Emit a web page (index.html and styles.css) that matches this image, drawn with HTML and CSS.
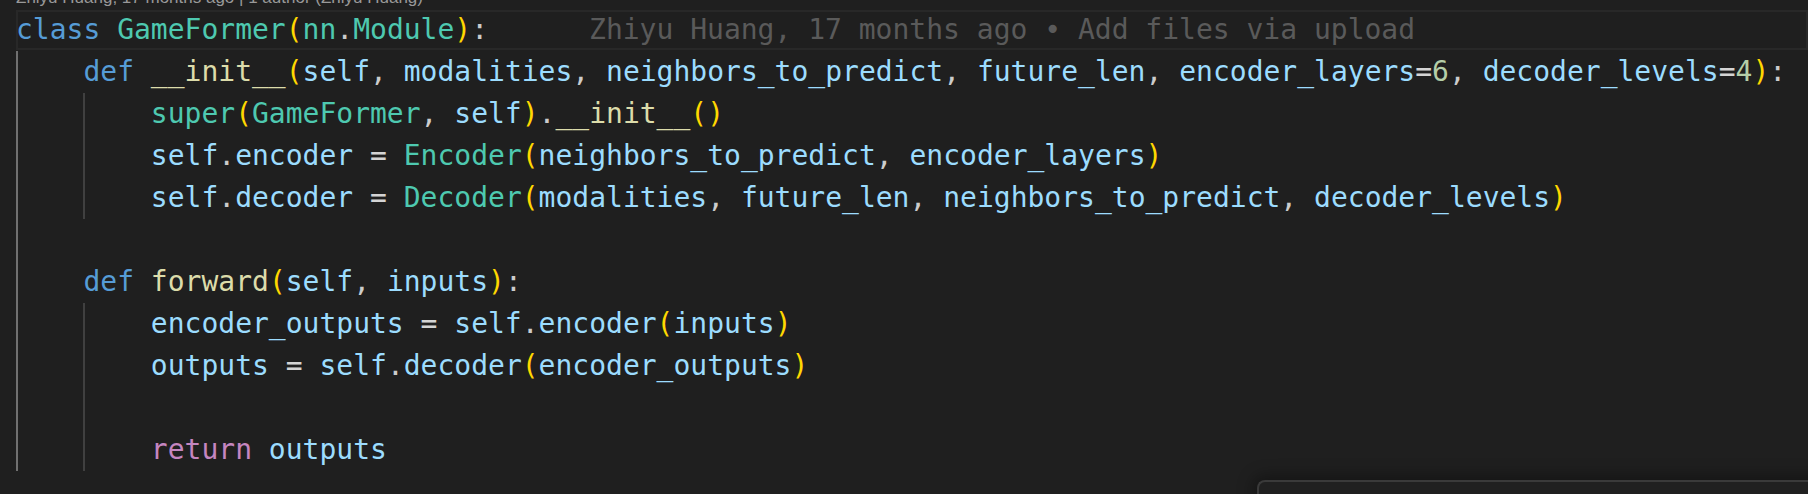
FILE: index.html
```html
<!DOCTYPE html>
<html lang="en">
<head>
<meta charset="utf-8">
<title>GameFormer</title>
<link rel="stylesheet" href="styles.css">
</head>
<body>
<div class="editor">
  <div class="codelens"><span class="lens-text">Zhiyu Huang, 17 months ago | 1 author (Zhiyu Huang)</span></div>
  <div class="line current"><span class="kw">class</span> <span class="ty">GameFormer</span><span class="br">(</span><span class="ty">nn</span><span class="p">.</span><span class="ty">Module</span><span class="br">)</span><span class="p">:</span><span class="blame">Zhiyu Huang, 17 months ago • Add files via upload</span></div>
  <div class="line"><span class="ig ig-a"></span><span class="kw">def</span> <span class="fn">__init__</span><span class="br">(</span><span class="v">self</span><span class="p">,</span> <span class="v">modalities</span><span class="p">,</span> <span class="v">neighbors_to_predict</span><span class="p">,</span> <span class="v">future_len</span><span class="p">,</span> <span class="v">encoder_layers</span><span class="op">=</span><span class="num">6</span><span class="p">,</span> <span class="v">decoder_levels</span><span class="op">=</span><span class="num">4</span><span class="br">)</span><span class="p">:</span></div>
  <div class="line"><span class="ig ig-a"></span><span class="ig"></span><span class="ty">super</span><span class="br">(</span><span class="ty">GameFormer</span><span class="p">,</span> <span class="v">self</span><span class="br">)</span><span class="p">.</span><span class="fn">__init__</span><span class="br">()</span></div>
  <div class="line"><span class="ig ig-a"></span><span class="ig"></span><span class="v">self</span><span class="p">.</span><span class="v">encoder</span> <span class="op">=</span> <span class="ty">Encoder</span><span class="br">(</span><span class="v">neighbors_to_predict</span><span class="p">,</span> <span class="v">encoder_layers</span><span class="br">)</span></div>
  <div class="line"><span class="ig ig-a"></span><span class="ig"></span><span class="v">self</span><span class="p">.</span><span class="v">decoder</span> <span class="op">=</span> <span class="ty">Decoder</span><span class="br">(</span><span class="v">modalities</span><span class="p">,</span> <span class="v">future_len</span><span class="p">,</span> <span class="v">neighbors_to_predict</span><span class="p">,</span> <span class="v">decoder_levels</span><span class="br">)</span></div>
  <div class="line"><span class="ig ig-a"></span></div>
  <div class="line"><span class="ig ig-a"></span><span class="kw">def</span> <span class="fn">forward</span><span class="br">(</span><span class="v">self</span><span class="p">,</span> <span class="v">inputs</span><span class="br">)</span><span class="p">:</span></div>
  <div class="line"><span class="ig ig-a"></span><span class="ig"></span><span class="v">encoder_outputs</span> <span class="op">=</span> <span class="v">self</span><span class="p">.</span><span class="v">encoder</span><span class="br">(</span><span class="v">inputs</span><span class="br">)</span></div>
  <div class="line"><span class="ig ig-a"></span><span class="ig"></span><span class="v">outputs</span> <span class="op">=</span> <span class="v">self</span><span class="p">.</span><span class="v">decoder</span><span class="br">(</span><span class="v">encoder_outputs</span><span class="br">)</span></div>
  <div class="line"><span class="ig ig-a"></span><span class="ig"></span></div>
  <div class="line"><span class="ig ig-a"></span><span class="ig"></span><span class="rk">return</span> <span class="v">outputs</span></div>
</div>
<div class="widget"></div>
</body>
</html>
```
FILE: styles.css
```css
html, body {
  margin: 0;
  padding: 0;
  background: #1f1f1f;
  width: 1808px;
  height: 494px;
  overflow: hidden;
}

.editor {
  padding-left: 16px;
  font-family: "DejaVu Sans Mono", monospace;
  font-size: 28px;
  color: #cccccc;
}

.codelens {
  height: 9px;
  overflow: hidden;
  display: flex;
  align-items: flex-end;
}

.lens-text {
  font-family: "Liberation Sans", Arial, sans-serif;
  font-size: 17px;
  line-height: 20px;
  margin-bottom: 1px;
  color: #999999;
  white-space: pre;
  flex: none;
}

.line {
  height: 42px;
  line-height: 42px;
  white-space: pre;
}

.current {
  position: relative;
}

.current::before {
  content: "";
  position: absolute;
  left: 0;
  right: 0;
  top: 1px;
  bottom: 1px;
  border: 2px solid #282828;
  pointer-events: none;
}

.ig {
  display: inline-block;
  width: 4ch;
  height: 42px;
  vertical-align: top;
  box-shadow: inset 2px 0 0 #404040;
}

.ig-a {
  box-shadow: inset 2px 0 0 #707070;
}

.kw { color: #569cd6; }
.ty { color: #4ec9b0; }
.fn { color: #dcdcaa; }
.v { color: #9cdcfe; }
.br { color: #ffd700; }
.p { color: #cccccc; }
.op { color: #d4d4d4; }
.num { color: #b5cea8; }
.rk { color: #c586c0; }

.blame {
  margin-left: 101px;
  color: #5a5a5a;
}

.widget {
  position: absolute;
  left: 1257px;
  top: 480px;
  width: 560px;
  height: 14px;
  background: #202020;
  border: 2px solid #3a3a3a;
  border-bottom: none;
  border-right: none;
  border-radius: 8px 0 0 0;
  box-shadow: 0 0 16px 4px rgba(0, 0, 0, 0.36);
}
```
